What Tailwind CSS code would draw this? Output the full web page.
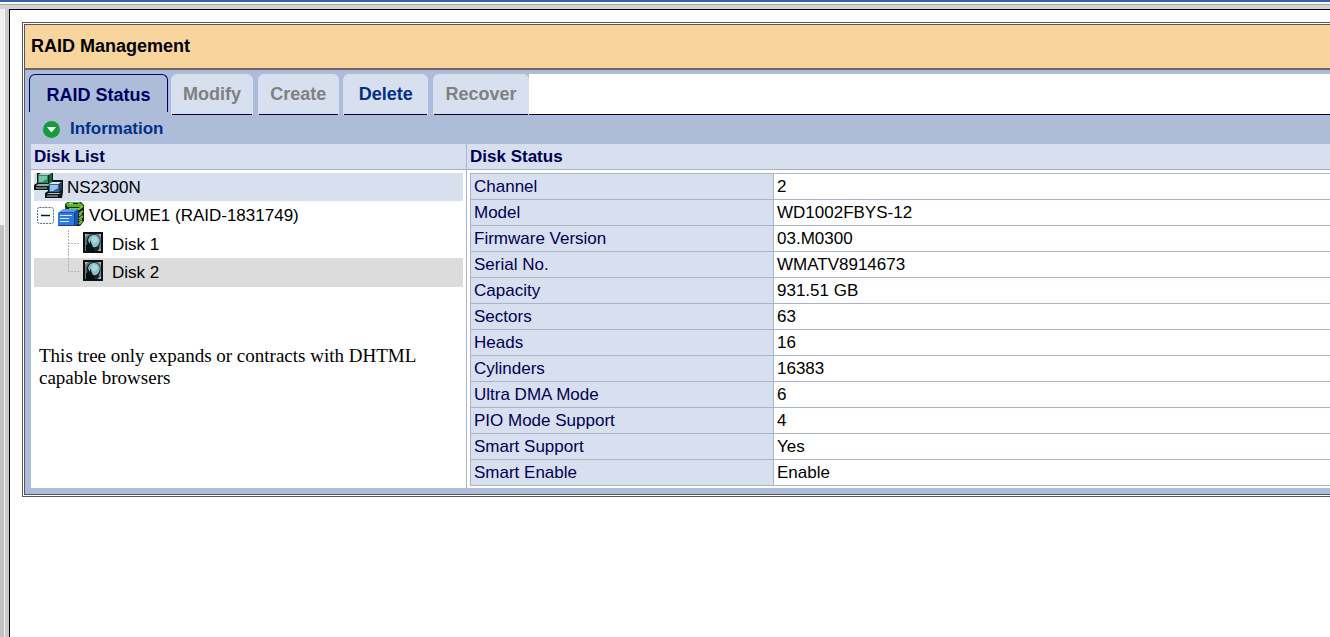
<!DOCTYPE html>
<html lang="en">
<head>
<meta charset="utf-8">
<meta name="viewport" content="width=device-width, initial-scale=1">
<title>RAID Management</title>
<script src="https://cdn.jsdelivr.net/npm/@tailwindcss/browser@4"></script>
</head>
<body class="flex min-h-screen flex-col bg-white font-['Liberation_Sans',Arial,sans-serif] text-[17px] leading-5 text-black">
<svg class="hidden" aria-hidden="true">
  <symbol id="disk" viewBox="0 0 20 21">
    <path fill="#0b1214" d="M0 0h20v21H0z"/>
    <path fill="#77777b" d="M2 2h16v17H2z"/>
    <path fill="#b3b3b6" d="M2 2h3L2 5zM18 2v3l-3-3zM18 19h-3l3-3z"/>
    <ellipse cx="10.500" cy="9.500" rx="7" ry="7.500" fill="#16262a"/>
    <ellipse cx="11" cy="9" rx="5.800" ry="6.300" fill="#86bfc6"/>
    <path fill="#a9d5d9" d="M10 4l4 1 1 4-4 3-3-4z"/>
    <path fill="#071013" d="M3 18v-5l2-1V9l2 3V8l2 5 1 2 2 2v2H3z"/>
    <path fill="#16262a" d="M12 16l4-3v4l-2 2h-3z"/>
  </symbol>
</svg>
<div class="h-1 shrink-0 border-t-2 border-[#3a5cab] bg-[#eefcff]"></div>
<div class="h-[5px] shrink-0 border-t border-[#9fab97] bg-[#d8cfd9]"></div>
<div class="flex grow">
  <div class="flex w-[9px] shrink-0" aria-hidden="true">
    <div class="flex w-1 flex-col bg-[#c2c2c2]"><div class="h-[216px] bg-[#f1f1f1]"></div></div>
    <div class="w-px bg-[#f4f4f4]"></div>
    <div class="w-1 bg-[#cacaca]"></div>
  </div>
  <main class="min-w-0 grow border-t border-l border-black pt-3 pl-3">
    <div class="border-y-3 border-l-3 border-double border-[#55575c] bg-[#adbcd9] bg-clip-padding">
      <header class="border-b-2 border-[#6d6664] bg-[#f7d59c] pt-[11px] pb-[11px] pl-1.5">
        <h1 class="text-lg leading-[21px] font-bold">RAID Management</h1>
      </header>
      <nav class="flex pt-1 pl-1 text-lg font-bold" aria-label="RAID functions">
        <div class="flex w-[500px] shrink-0 items-start bg-[#adbcd9]">
          <button class="h-[38px] w-[139px] rounded-t-md border border-b-0 border-[#000066] pt-0.5 text-[#000066]">RAID Status</button>
          <div class="flex h-[41px] grow justify-between gap-1 pr-px pl-1 text-[#808080]">
            <button class="w-20 rounded-t-md border-b border-[#000033] bg-[#d8dfef] shadow-[1px_0_0_#d8dfef,-1px_0_0_#d8dfef]" disabled>Modify</button>
            <button class="w-[79px] rounded-t-md border-b border-[#000033] bg-[#d8dfef] shadow-[1px_0_0_#d8dfef,-1px_0_0_#d8dfef]" disabled>Create</button>
            <button class="w-[83px] rounded-t-md border-b border-[#000033] bg-[#d8dfef] text-[#003087] shadow-[1px_0_0_#d8dfef,-1px_0_0_#d8dfef]">Delete</button>
            <button class="w-[94px] rounded-t-md border-b border-[#000033] bg-[#d8dfef] shadow-[1px_0_0_#d8dfef,-1px_0_0_#d8dfef]" disabled>Recover</button>
          </div>
        </div>
        <div class="grow border-b border-[#000033] bg-white"></div>
      </nav>
      <div class="flex h-[29px] items-center gap-2.5 pl-[18px] font-bold text-[#003087]">
        <svg class="size-[17px]" viewBox="0 0 17 17" aria-hidden="true"><circle cx="8.500" cy="8.500" r="8.500" fill="#169b3c"/><path d="M4 6h9l-4.500 5.500z" fill="#fff"/></svg>
        <h2 class="pb-0.5">Information</h2>
      </div>
      <div class="flex pb-1.5 pl-1.5">
        <section class="w-[435px] shrink-0 bg-white">
          <h3 class="border-b border-[#a5b2c9] bg-[#d8dfef] pt-[3px] pb-0.5 pl-[3px] font-bold text-[#000055]">Disk List</h3>
          <ul class="px-[3px] pt-[3px]">
            <li class="flex h-7 items-center gap-1 bg-[#d8dfef]">
              <svg class="h-7 w-[29px]" viewBox="0 1 29 28" aria-hidden="true">
                <path fill="#10191a" d="M3 0h16v10l-2 2v6H0v-5l3-2zM14 8h15v12l-1 6H11v-5l3-2z"/>
                <path fill="#b9c9c5" d="M4 3l3-2h11l-3 2z"/>
                <path fill="#2d8a6b" d="M4 3h10v8H4z"/><path fill="#79c79e" d="M5 4h8v3l-5 3H5z"/><path fill="#0a6b38" d="M15 3l3-2v9l-3 2z"/>
                <path fill="#9da9a9" d="M2 14l2-2h12l-2 2z"/><path fill="#5e7170" d="M2 15h11v2H2z"/>
                <path fill="#dce3f1" d="M15 12l3-2h10l-3 2z"/><path fill="#2e61a2" d="M15 12h10v8H15z"/><path fill="#9ac4e4" d="M16 13h8v3l-5 3h-3z"/><path fill="#25364e" d="M25 12l3-3v9l-3 2z"/>
                <path fill="#b9bcc2" d="M13 22l2-1h12l-2 1z"/><path fill="#6d6870" d="M13 23h11v2H13z"/>
              </svg>
              <span class="pt-0.5">NS2300N</span>
            </li>
            <li>
              <div class="flex h-[29px] items-center">
                <button class="w-[22px]" aria-label="Collapse VOLUME1"><svg class="h-5 w-[22px]" viewBox="0 1 22 20"><rect x="3.500" y="2.500" width="16" height="16" rx="2" fill="#fff" stroke="#526f91" stroke-dasharray="2 1"/><path d="M7 10.500h9" stroke="#101820" stroke-width="1.500"/><path d="M11.500 0v2" stroke="#a8b4c0"/></svg></button>
                <svg class="h-7 w-[29px]" viewBox="0 2 29 28" aria-hidden="true">
                  <path fill="#18260d" d="M9 4l4-3h11l4 4v16l-4 5H10z"/>
                  <path fill="#57b430" d="M11 3l3-1h9l4 3-2 2H12l-2-2z"/><path fill="#b5dc62" d="M13 3h8v1h-8z"/><path fill="#18260d" d="M17 3h5v1h-5z"/>
                  <path fill="none" stroke="#77c143" stroke-width="2" d="M13 9h10l4-3M23 14l4-3M23 19l4-3M23 24l3-3"/>
                  <path fill="none" stroke="#d9ce71" d="M21 10l2-1M23 16l3-2M23 21l3-2"/>
                  <path fill="#1456b4" d="M2 13l6-4h14v15l-3 2H2z"/><path fill="#5f9bea" d="M3 12l5-3h14l-4 3z"/><path fill="#2e7be0" d="M2 13h16v12H2z"/>
                  <path stroke="#d9eafa" d="M4 15.500h12M4 18.500h9M4 21.500h9"/><path stroke="#153f88" d="M4 25.500h15M18.500 13v12"/>
                </svg>
                <span class="pl-1">VOLUME1 (RAID-1831749)</span>
              </div>
              <ul>
                <li class="flex h-7 items-center pl-[34px]">
                  <svg class="h-7 w-[15px]" viewBox="0 0 15 28" aria-hidden="true"><path d="M.5 0v28M0 13.500h12" stroke="#b5b5bd" stroke-dasharray="2 1" fill="none"/></svg>
                  <svg class="mb-1 h-[21px] w-5" viewBox="0 0 20 21" aria-hidden="true"><use href="#disk"/></svg>
                  <span class="pt-0.5 pl-[9px]">Disk 1</span>
                </li>
                <li class="flex h-[29px] items-center bg-[#dcdcdc] pl-[34px]">
                  <svg class="h-[29px] w-[15px]" viewBox="0 0 15 29" aria-hidden="true"><path d="M.5 0v14M0 13.500h12" stroke="#b5b5bd" stroke-dasharray="2 1" fill="none"/></svg>
                  <svg class="mb-1 h-[21px] w-5" viewBox="0 0 20 21" aria-hidden="true"><use href="#disk"/></svg>
                  <span class="pl-[9px]">Disk 2</span>
                </li>
              </ul>
            </li>
          </ul>
          <p class="px-2 pt-[58px] font-['Liberation_Serif','Times_New_Roman',serif] text-[19px] leading-[22px]">This tree only expands or contracts with DHTML capable browsers</p>
        </section>
        <section class="min-w-0 grow border-l border-[#a5b5cf] bg-white pb-0.5">
          <h3 class="border-b border-[#a5b2c9] bg-[#d8dfef] pt-[3px] pb-0.5 pl-[3px] font-bold text-[#000055]">Disk Status</h3>
          <div class="pt-[3px] pl-[3px]">
            <table class="w-full table-fixed border-collapse border-y border-l border-[#a8b5cb] text-left">
              <colgroup><col class="w-[303px]"><col></colgroup>
              <tbody class="[&_td]:h-[26px] [&_td]:border-b [&_td]:border-[#a8b5cb] [&_td]:pl-[3px] [&_th]:border-r [&_th]:border-b [&_th]:border-[#a8b5cb] [&_th]:bg-[#d8dfef] [&_th]:pl-[3px] [&_th]:font-normal [&_th]:text-[#000055]">
                <tr><th scope="row">Channel</th><td>2</td></tr>
                <tr><th scope="row">Model</th><td>WD1002FBYS-12</td></tr>
                <tr><th scope="row">Firmware Version</th><td>03.M0300</td></tr>
                <tr><th scope="row">Serial No.</th><td>WMATV8914673</td></tr>
                <tr><th scope="row">Capacity</th><td>931.51 GB</td></tr>
                <tr><th scope="row">Sectors</th><td>63</td></tr>
                <tr><th scope="row">Heads</th><td>16</td></tr>
                <tr><th scope="row">Cylinders</th><td>16383</td></tr>
                <tr><th scope="row">Ultra DMA Mode</th><td>6</td></tr>
                <tr><th scope="row">PIO Mode Support</th><td>4</td></tr>
                <tr><th scope="row">Smart Support</th><td>Yes</td></tr>
                <tr><th scope="row">Smart Enable</th><td>Enable</td></tr>
              </tbody>
            </table>
          </div>
        </section>
      </div>
    </div>
  </main>
</div>
</body>
</html>
